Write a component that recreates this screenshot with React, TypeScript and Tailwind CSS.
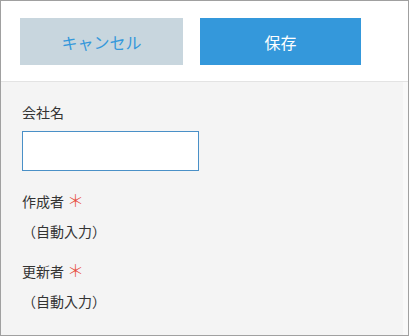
import React from "react";

const font = { fontFamily: '"Noto Sans CJK JP", "Noto Sans", sans-serif' };

const Field: React.FC<{ label: string; required?: boolean; className?: string; children: React.ReactNode }> = ({
  label,
  required,
  className,
  children,
}) => (
  <div className={className}>
    <div className="flex items-center h-[20px] text-[14px] text-[#333333]">
      <span>{label}</span>
      {required && (
        <span className="ml-[3px] text-[#e74c3c] text-[17px] font-light leading-[20px] -translate-y-[1px]">＊</span>
      )}
    </div>
    {children}
  </div>
);

export default function App() {
  return (
    <div
      className="w-[409px] h-[336px] border border-[#a0a0a0] bg-white flex flex-col overflow-hidden"
      style={font}
    >
      {/* ボタン */}
      <div className="h-[81px] flex items-start pt-[17px] pl-[19px] gap-[17px] border-b border-[#e3e3e3] bg-white">
        <button className="w-[163px] h-[47px] bg-[#c8d6de] text-[#3498db] text-[16px]">
          キャンセル
        </button>
        <button className="w-[161px] h-[47px] bg-[#3498db] text-white text-[16px]">
          保存
        </button>
      </div>

      {/* フォーム */}
      <div className="flex-1 bg-[#f4f4f4] px-[21px] pt-[20px] border-r-[5px] border-[#f9f9f9]">
        <Field label="会社名" className="mb-[20px]">
          <input
            type="text"
            className="mt-[9px] w-[177px] h-[40px] border border-[#4a90c7] bg-white px-2 outline-none block"
          />
        </Field>
        <Field label="作成者" required className="mb-[20px]">
          <div className="mt-[10px] h-[20px] text-[14px] text-[#333333] flex items-center">（自動入力）</div>
        </Field>
        <Field label="更新者" required>
          <div className="mt-[10px] h-[20px] text-[14px] text-[#333333] flex items-center">（自動入力）</div>
        </Field>
      </div>
    </div>
  );
}
